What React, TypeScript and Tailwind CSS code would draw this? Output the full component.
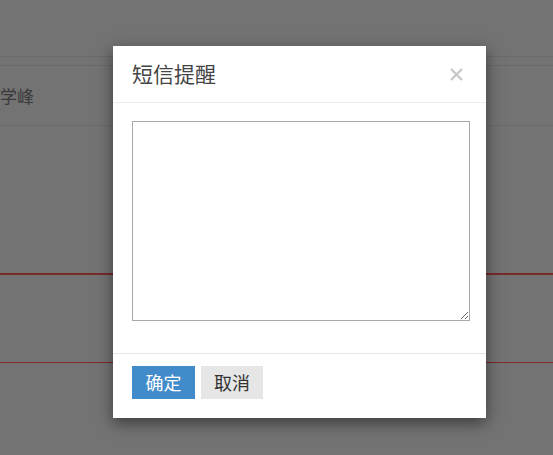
export default function App() {
  return (
    <div
      className="relative h-[455px] w-[553px] overflow-hidden bg-[#737373]"
      style={{ fontFamily: '"Noto Sans CJK SC", "Noto Sans", sans-serif' }}
    >
      {/* page behind the backdrop */}
      <div className="flex flex-col">
        <div className="h-[57px] border-b border-[#6a6a6a]" />
        <div className="h-[9px] border-b border-[#6a6a6a]" />
        <div className="flex h-[60px] items-center border-b border-[#6a6a6a] text-[17px] text-[#3a3a3a]">
          学峰
        </div>
        <div className="h-[149px] border-b-2 border-[#7b2929]" />
        <div className="h-[88px] border-b border-[#7e2a2a]" />
      </div>

      {/* modal */}
      <div className="absolute left-[113px] top-[46px] flex w-[373px] flex-col bg-white shadow-[0_5px_15px_rgba(0,0,0,0.5)]">
        <div className="flex h-[57px] items-center justify-between border-b border-[#eeeeee] pl-[19px] pr-[23px]">
          <span className="text-[21px] text-[#444]">短信提醒</span>
          <svg width="13" height="13" viewBox="0 0 13 13" className="text-[#c8c8c8]">
            <path d="M1 1 L12 12 M12 1 L1 12" stroke="currentColor" strokeWidth="2.4" />
          </svg>
        </div>
        <div className="pb-[32px] pl-[19px] pr-[16px] pt-[18px]">
          <textarea className="block h-[200px] w-[338px] border border-[#a9a9a9] bg-white outline-none" />
        </div>
        <div className="flex gap-[6px] border-t border-[#e5e5e5] px-[19px] pb-[19px] pt-[12px]">
          <button className="h-[33px] w-[63px] bg-[#428bca] text-[18px] text-white">确定</button>
          <button className="h-[33px] w-[62px] bg-[#e6e6e6] text-[18px] text-[#333]">取消</button>
        </div>
      </div>
    </div>
  )
}
